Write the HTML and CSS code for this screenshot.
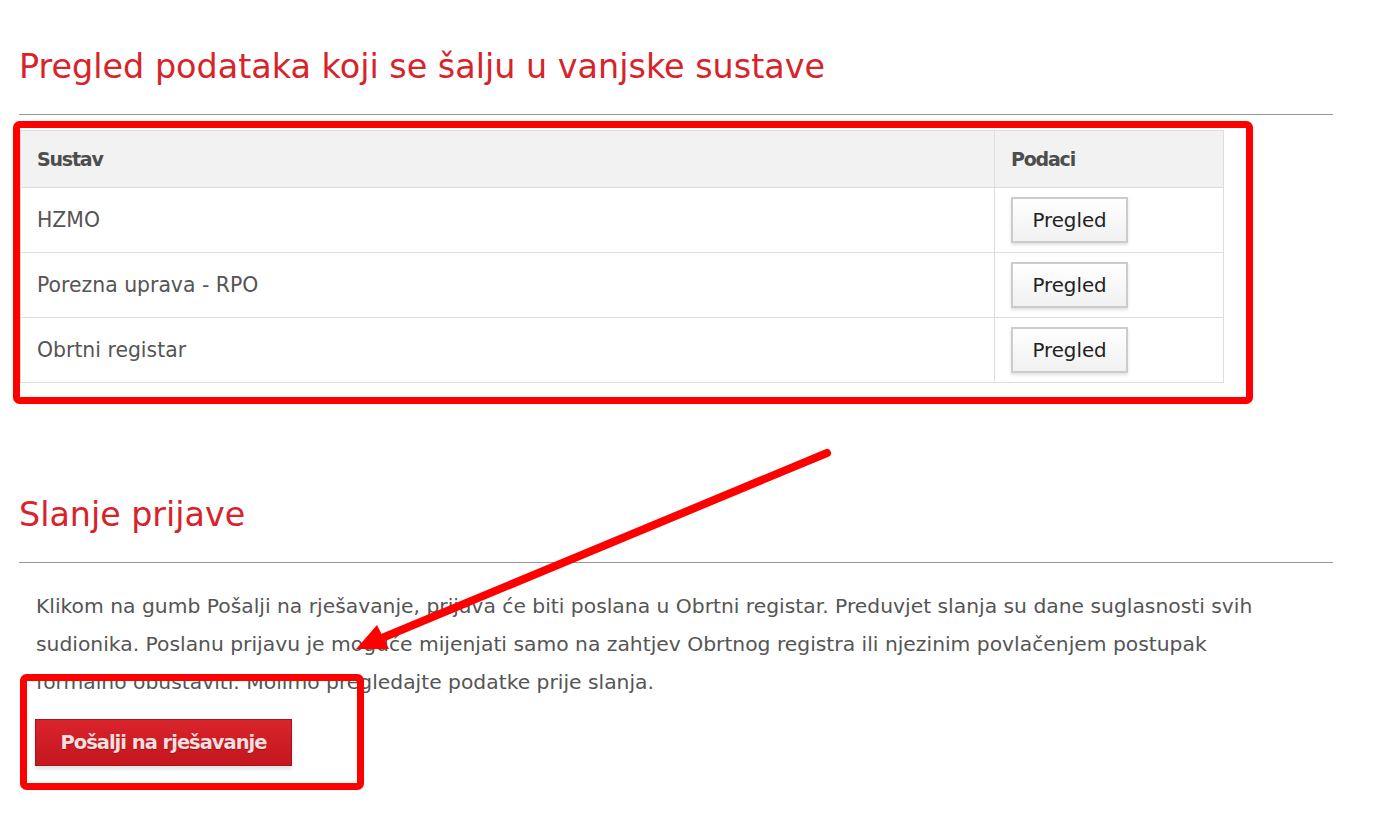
FILE: index.html
```html
<!DOCTYPE html>
<html lang="hr">
<head>
<meta charset="utf-8">
<title>Pregled podataka</title>
<link rel="stylesheet" href="styles.css">
</head>
<body>
<div class="page">
  <section class="block">
    <h1 class="title">Pregled podataka koji se šalju u vanjske sustave</h1>
    <hr class="rule">
    <table class="systems">
      <thead>
        <tr><th class="col-name">Sustav</th><th class="col-data">Podaci</th></tr>
      </thead>
      <tbody>
        <tr><td class="cell-name">HZMO</td><td class="cell-data"><button class="btn-view">Pregled</button></td></tr>
        <tr><td class="cell-name">Porezna uprava - RPO</td><td class="cell-data"><button class="btn-view">Pregled</button></td></tr>
        <tr><td class="cell-name">Obrtni registar</td><td class="cell-data"><button class="btn-view">Pregled</button></td></tr>
      </tbody>
    </table>
  </section>
  <section class="block block-send">
    <h2 class="title">Slanje prijave</h2>
    <hr class="rule">
    <p class="info">Klikom na gumb Pošalji na rješavanje, prijava će biti poslana u Obrtni registar. Preduvjet slanja su dane suglasnosti svih sudionika. Poslanu prijavu je moguće mijenjati samo na zahtjev Obrtnog registra ili njezinim povlačenjem postupak formalno obustaviti. Molimo pregledajte podatke prije slanja.</p>
    <div class="actions"><button class="btn-send">Pošalji na rješavanje</button></div>
  </section>
</div>
<svg class="annot" width="1389" height="826" viewBox="0 0 1389 826">
  <rect x="16.5" y="124.5" width="1233" height="276" rx="3" fill="none" stroke="#ff0000" stroke-width="7"/>
  <rect x="23.5" y="677.5" width="337" height="109" rx="3" fill="none" stroke="#ff0000" stroke-width="7"/>
  <line x1="827" y1="453" x2="382" y2="638" stroke="#ff0000" stroke-width="8" stroke-linecap="round"/>
  <polygon points="356,649 377,625 389,649" fill="#ff0000"/>
</svg>
</body>
</html>
```
FILE: styles.css
```css
html, body {
  margin: 0;
  padding: 0;
  background: #ffffff;
}
body {
  font-family: "DejaVu Sans", "Liberation Sans", sans-serif;
  color: #555555;
  width: 1389px;
  height: 826px;
  overflow: hidden;
  position: relative;
}
.page {
  padding: 0 56px 0 19px;
}
.title {
  margin: 0;
  font-weight: normal;
  font-size: 33.3px;
  line-height: 40px;
  color: #d8232a;
}
h1.title {
  padding-top: 47px;
  font-size: 33.4px;
}
.rule {
  margin: 27px 0 0;
  border: 0;
  border-top: 1px solid #999999;
  height: 0;
}
.systems {
  margin: 15px 0 0 1px;
  width: 1204px;
  border-collapse: collapse;
  font-size: 20.4px;
}
.systems th, .systems td {
  border: 1px solid #dddddd;
  text-align: left;
  vertical-align: middle;
}
.systems th {
  background: #f2f2f2;
  font-weight: bold;
  font-size: 19px;
  letter-spacing: -1.2px;
  color: #4d4d4d;
  padding: 16px 16px;
  line-height: 24px;
}
.systems td {
  padding: 9px 16px;
  line-height: 24px;
}
.col-name { width: 941px; }
.col-data { width: auto; }
.cell-data { padding-left: 17px; }
.btn-view {
  display: block;
  width: 117px;
  height: 46px;
  box-sizing: border-box;
  border: 2px solid #cccccc;
  background: linear-gradient(#ffffff, #f1f1f1);
  box-shadow: 0 2px 3px rgba(0,0,0,0.12);
  font-family: inherit;
  font-size: 19.8px;
  color: #222222;
  padding: 0;
  cursor: pointer;
}
.block-send {
  margin-top: 112px;
}
.info {
  margin: 24px 0 0;
  padding: 0 58px 0 17px;
  font-size: 20.3px;
  line-height: 38px;
  color: #555555;
}
.actions {
  margin-top: 18px;
  padding-left: 16px;
}
.btn-send {
  display: block;
  width: 257px;
  height: 47px;
  box-sizing: border-box;
  border: 1px solid #a3161b;
  background: linear-gradient(#da242c, #c4161d);
  box-shadow: 0 3px 4px rgba(0,0,0,0.12);
  color: #f6dede;
  font-family: inherit;
  font-weight: bold;
  font-size: 19.5px;
  letter-spacing: -1px;
  padding: 0;
  text-shadow: 0 1px 1px rgba(0,0,0,0.25);
  cursor: pointer;
}
.annot {
  position: absolute;
  top: 0;
  left: 0;
  pointer-events: none;
}
```
